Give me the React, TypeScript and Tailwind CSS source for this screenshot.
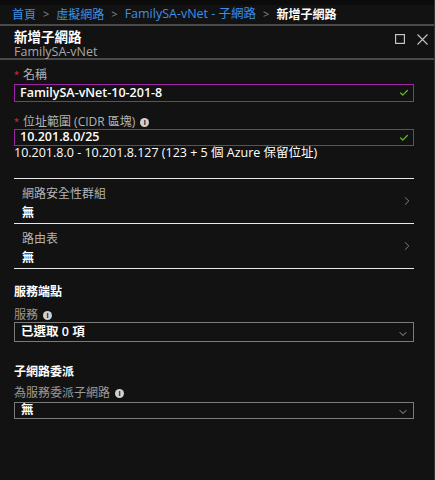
import { ChevronRight, ChevronDown, Check } from "lucide-react";

const font = { fontFamily: '"Open Sans", "Noto Sans CJK TC", sans-serif' };

function InfoDot() {
  return (
    <span className="inline-flex items-center justify-center w-[9px] h-[9px] rounded-full bg-[#d0d0d0] text-[#121212] text-[7px] font-bold leading-none ml-[5px]">
      i
    </span>
  );
}

function Field({ label, value }: { label: string; value: string }) {
  return (
    <div className="relative h-[45px] border-b border-[#e8e8e8] pt-[8px] pl-[8px]">
      <div className="text-[12px] text-[#b4b4b4] leading-[14px]">{label}</div>
      <div className="text-[12px] text-white font-bold leading-[14px] mt-[5px]">{value}</div>
      <ChevronRight size={14} strokeWidth={1.3} className="absolute right-0 top-[15px] text-[#a0a0a0]" />
    </div>
  );
}

function Select({ value, h }: { value: string; h: string }) {
  return (
    <div className={`${h} border border-[#7a7a7a] flex items-center justify-between pl-[6px] pr-[4px]`}>
      <span className="text-[12.5px] text-white font-semibold leading-none">{value}</span>
      <ChevronDown size={12} strokeWidth={1.5} className="text-[#cfcfcf] mt-[3px]" />
    </div>
  );
}

export default function App() {
  return (
    <div className="w-[435px] h-[480px] bg-[#121212] flex flex-col overflow-hidden border-r border-[#333333]" style={font}>
      {/* top strip */}
      <div className="h-[5px] bg-[#0b0b0b]" />

      {/* Breadcrumb */}
      <div className="h-[21px] flex items-center pl-[12px] text-[12px] gap-[7px] border-b-2 border-[#4a4a4a]">
        <span className="text-[#3c8fe8]">首頁</span>
        <span className="text-[#8a8a8a] text-[11px]">&gt;</span>
        <span className="text-[#3c8fe8]">虛擬網路</span>
        <span className="text-[#8a8a8a] text-[11px]">&gt;</span>
        <span className="text-[#3c8fe8] text-[12.5px]">FamilySA-vNet - 子網路</span>
        <span className="text-[#8a8a8a] text-[11px]">&gt;</span>
        <span className="text-white font-bold">新增子網路</span>
      </div>

      {/* Panel header */}
      <div className="relative h-[34px] border-b-2 border-[#4a4a4a] pl-[14px] pt-[3px]">
        <div className="text-[13.5px] text-white font-bold leading-[16px]">新增子網路</div>
        <div className="text-[12.5px] text-[#a8a8a8] leading-[13px]">FamilySA-vNet</div>
        <svg width="10" height="10" viewBox="0 0 10 10" className="absolute right-[29px] top-[8px]">
          <rect x="0.6" y="0.6" width="8.8" height="8.8" fill="none" stroke="#c4c4c4" strokeWidth="1.2" />
        </svg>
        <svg width="11" height="11" viewBox="0 0 11 11" className="absolute right-[6px] top-[8px]">
          <path d="M0.5 0.5 L10.5 10.5 M10.5 0.5 L0.5 10.5" stroke="#c4c4c4" strokeWidth="1.1" />
        </svg>
      </div>

      <div className="pl-[14px] pr-[20px] pt-[8px] flex flex-col">
        {/* Name */}
        <div className="text-[12px] text-[#b4b4b4] leading-[14px] flex items-center">
          <span className="text-[#e0303a] text-[9px] mr-[4px]">*</span>名稱
        </div>
        <div className="mt-[2px] h-[18px] border border-[#a21fa8] flex items-center justify-between pl-[5px] pr-[4px]">
          <span className="text-[12.5px] text-white font-semibold leading-none">FamilySA-vNet-10-201-8</span>
          <Check size={10} strokeWidth={3} className="text-[#5fbf1f]" />
        </div>

        {/* CIDR */}
        <div className="mt-[13px] text-[12px] text-[#b4b4b4] leading-[14px] flex items-center">
          <span className="text-[#e0303a] text-[9px] mr-[4px]">*</span>位址範圍 (CIDR 區塊)
          <InfoDot />
        </div>
        <div className="h-[17px] border border-[#a21fa8] flex items-center justify-between pl-[5px] pr-[4px]">
          <span className="text-[12.5px] text-white font-semibold leading-none">10.201.8.0/25</span>
          <Check size={10} strokeWidth={3} className="text-[#5fbf1f]" />
        </div>
        <div className="text-[12.5px] text-white leading-[14px]">
          10.201.8.0 - 10.201.8.127 (123 + 5 個 Azure 保留位址)
        </div>

        {/* Links */}
        <div className="mt-[18px] border-t border-[#e8e8e8]">
          <Field label="網路安全性群組" value="無" />
          <Field label="路由表" value="無" />
        </div>

        {/* Service endpoints */}
        <div className="mt-[16px] text-[12px] text-white font-bold leading-[14px]">服務端點</div>
        <div className="mt-[9px] text-[12px] text-[#9a9a9a] leading-[14px] flex items-center">
          服務 <InfoDot />
        </div>
        <Select value="已選取 0 項" h="h-[20px]" />

        {/* Delegation */}
        <div className="mt-[23px] text-[12px] text-white font-bold leading-[14px]">子網路委派</div>
        <div className="mt-[7px] text-[12px] text-[#9a9a9a] leading-[14px] flex items-center">
          為服務委派子網路 <InfoDot />
        </div>
        <div className="mt-[2px]">
          <Select value="無" h="h-[17px]" />
        </div>
      </div>
    </div>
  );
}
